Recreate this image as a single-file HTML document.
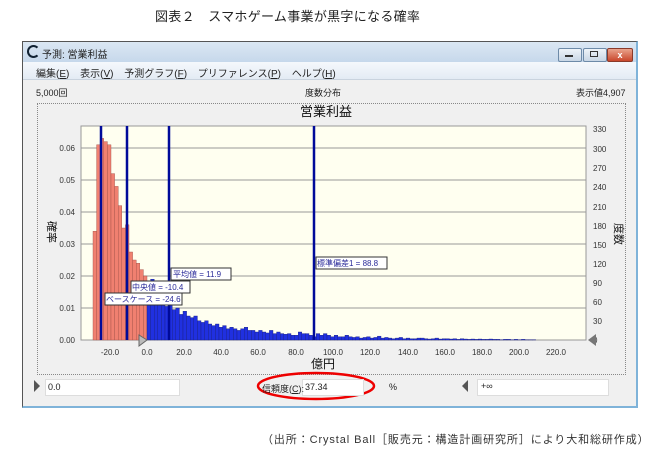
<!DOCTYPE html>
<html><head><meta charset="utf-8"><style>
body{margin:0;width:662px;height:455px;background:#fff;position:relative;overflow:hidden;font-family:"Liberation Sans","Noto Sans CJK JP",sans-serif;}
.a{position:absolute;white-space:nowrap;}
.s{font-size:9px;color:#222;}
</style></head><body>
<div class="a" style="left:155px;top:6px;font-size:13px;color:#222;letter-spacing:0.3px">図表２　スマホゲーム事業が黒字になる確率</div>
<div class="a" style="left:22px;top:41px;width:613px;height:364px;border:1px solid #555;border-right:2px solid #7fb3d9;border-bottom:2px solid #7fb3d9;background:#f0f0f0;"></div>
<div class="a" style="left:23px;top:42px;width:613px;height:20px;background:linear-gradient(#dbe7f3,#c6d8eb);"></div>
<div class="a" style="left:27px;top:45px;width:9px;height:9px;border:2px solid #123;border-right-color:transparent;border-radius:50%"></div>
<div class="a s" style="left:42px;top:46px;font-size:10px">予測: 営業利益</div>
<div class="a" style="left:558px;top:48px;width:22px;height:12px;border:1px solid #6d8aa8;border-radius:2px;background:linear-gradient(#eef3f8,#c8d6e5)"></div>
<div class="a" style="left:565px;top:55px;width:8px;height:2px;background:#333"></div>
<div class="a" style="left:583px;top:48px;width:22px;height:12px;border:1px solid #6d8aa8;border-radius:2px;background:linear-gradient(#eef3f8,#c8d6e5)"></div>
<div class="a" style="left:590px;top:51px;width:6px;height:4px;border:1px solid #333"></div>
<div class="a" style="left:607px;top:48px;width:24px;height:12px;border:1px solid #8a3a2a;border-radius:2px;background:linear-gradient(#e9a38c,#c9472c);color:#fff;font-size:9px;text-align:center;line-height:12px;font-weight:bold">x</div>
<div class="a" style="left:23px;top:62px;width:613px;height:17px;background:linear-gradient(#f5f8fc,#e3ebf4);border-bottom:1px solid #c9d3de"></div>
<div class="a s" style="left:36px;top:65px;font-size:10px;word-spacing:8px">編集(<u>E</u>) 表示(<u>V</u>) 予測グラフ(<u>F</u>) プリファレンス(<u>P</u>) ヘルプ(<u>H</u>)</div>
<div class="a s" style="left:36px;top:86px">5,000回</div>
<div class="a s" style="left:305px;top:86px">度数分布</div>
<div class="a s" style="left:576px;top:86px">表示値4,907</div>
<div class="a" style="left:37px;top:103px;width:587px;height:270px;border:1px dotted #888;background:#f0f0f0"></div>
<div class="a" style="left:300px;top:101px;font-size:13px;color:#111">営業利益</div>
<svg class="a" style="left:0;top:0" width="662" height="455" id="ch">
<rect x="81" y="126" width="505" height="214" fill="#fffff0" stroke="#999"/>
<g stroke="#999" stroke-width="1">
<line x1="81" y1="148" x2="586" y2="148"/><line x1="81" y1="180" x2="586" y2="180"/><line x1="81" y1="212" x2="586" y2="212"/><line x1="81" y1="244" x2="586" y2="244"/><line x1="81" y1="276" x2="586" y2="276"/><line x1="81" y1="308" x2="586" y2="308"/>
</g>
<g id="bars"></g>
<g stroke="#000a9a" stroke-width="2.5">
<line x1="101" y1="126" x2="101" y2="340"/><line x1="127" y1="126" x2="127" y2="340"/><line x1="169" y1="126" x2="169" y2="340"/><line x1="314" y1="126" x2="314" y2="340"/>
</g>
<g font-size="8" fill="#2a2a99" font-family="Liberation Sans,Noto Sans CJK JP,sans-serif">
<rect x="171" y="268" width="60" height="12" fill="#fff" stroke="#333"/><text x="173" y="277">平均値 = 11.9</text>
<rect x="131" y="281" width="59" height="12" fill="#fff" stroke="#333"/><text x="132" y="290">中央値 = -10.4</text>
<rect x="105" y="293" width="77" height="12" fill="#fff" stroke="#333"/><text x="106" y="302">ベースケース = -24.6</text>
<rect x="316" y="257" width="71" height="12" fill="#fff" stroke="#333"/><text x="317" y="266">標準偏差1 = 88.8</text>
</g>
<g font-size="8" fill="#333" font-family="Liberation Sans,sans-serif" text-anchor="end">
<text x="75" y="343">0.00</text><text x="75" y="311">0.01</text><text x="75" y="279">0.02</text><text x="75" y="247">0.03</text><text x="75" y="215">0.04</text><text x="75" y="183">0.05</text><text x="75" y="151">0.06</text>
</g>
<g font-size="8" fill="#333" font-family="Liberation Sans,sans-serif">
<text x="593" y="343">0</text><text x="593" y="324">30</text><text x="593" y="305">60</text><text x="593" y="286">90</text><text x="593" y="267">120</text><text x="593" y="248">150</text><text x="593" y="229">180</text><text x="593" y="210">210</text><text x="593" y="190">240</text><text x="593" y="171">270</text><text x="593" y="152">300</text><text x="593" y="132">330</text>
</g>
<g font-size="8" fill="#333" font-family="Liberation Sans,sans-serif" text-anchor="middle">
<text x="110" y="355">-20.0</text><text x="147" y="355">0.0</text><text x="184" y="355">20.0</text><text x="221" y="355">40.0</text><text x="258" y="355">60.0</text><text x="296" y="355">80.0</text><text x="333" y="355">100.0</text><text x="370" y="355">120.0</text><text x="408" y="355">140.0</text><text x="445" y="355">160.0</text><text x="482" y="355">180.0</text><text x="519" y="355">200.0</text><text x="556" y="355">220.0</text>
</g>
<polygon points="139,335 147,340 139,346" fill="#bbb" stroke="#666"/>
<polygon points="596,334 588,340 596,346" fill="#777"/>
<text x="323" y="368" font-size="12" fill="#111" font-family="Noto Sans CJK JP,sans-serif" text-anchor="middle">億円</text>
<text transform="translate(48,232) rotate(90)" font-size="11" fill="#111" font-family="Noto Sans CJK JP,sans-serif" text-anchor="middle">確率</text>
<text transform="translate(615,234) rotate(90)" font-size="11" fill="#111" font-family="Noto Sans CJK JP,sans-serif" text-anchor="middle">度数</text>
<polygon points="34,380 40,386 34,392" fill="#555"/>
<polygon points="468,380 462,386 468,392" fill="#555"/>
<ellipse cx="316" cy="386" rx="58" ry="13" fill="none" stroke="#e00" stroke-width="2.5"/>
</svg>
<div class="a" style="left:45px;top:379px;width:133px;height:15px;background:#fff;border:1px solid #ddd"></div>
<div class="a s" style="left:48px;top:382px">0.0</div>
<div class="a" style="left:302px;top:379px;width:60px;height:15px;background:#fff;border:1px solid #ddd"></div>
<div class="a s" style="left:262px;top:382px">信頼度(<u>C</u>):</div>
<div class="a s" style="left:305px;top:382px">37.34</div>
<div class="a s" style="left:389px;top:382px">%</div>
<div class="a" style="left:477px;top:379px;width:130px;height:15px;background:#fff;border:1px solid #ddd"></div>
<div class="a s" style="left:481px;top:381px">+∞</div>
<div class="a" style="left:262px;top:431px;font-size:11px;color:#333;letter-spacing:0.9px">（出所：Crystal Ball［販売元：構造計画研究所］により大和総研作成）</div>
<script>
var h=[0.034,0.061,0.063,0.062,0.061,0.052,0.048,0.042,0.035,0.036,0.0275,0.025,0.024,0.022,0.020,
0.0185,0.019,0.014,0.012,0.011,0.0105,0.011,0.0095,0.01,0.008,0.009,0.0075,0.007,0.0075,0.006,0.0055,0.006,0.005,0.0045,0.005,0.004,0.0045,0.0035,0.004,0.0035,0.003,0.0035,0.004,0.003,0.003,0.0025,0.003,0.0025,0.0022,0.003,0.002,0.0025,0.002,0.0018,0.002,0.0015,0.0015,0.0025,0.002,0.002,0.0015,0.001,0.002,0.0015,0.002,0.0015,0.001,0.0015,0.001,0.001,0.0015,0.001,0.0008,0.001,0.0006,0.0008,0.001,0.0006,0.0008,0.0012,0.0006,0.0008,0.0006,0.0004,0.0006,0.0008,0.0004,0.0006,0.0004,0.0004,0.0006,0.0006,0.0004,0.0003,0.0004,0.0006,0.0003,0.0004,0.0004,0.0003,0.0004,0.0002,0.0004,0.0003,0.0002,0.0003,0.0002,0.0003,0.0002,0.0002,0.0003,0.0002,0.0002,0.0001,0.0002,0.0002,0.0001,0.0002,0.0001,0.0002,0.0001,0.0001,0.0001];
var s='',x=93;
for(var i=0;i<h.length;i++){var hh=h[i]*3200;var c=x<146?'#f08070':'#2030e0';var sc=x<146?'#a05048':'#1a2080';
s+='<rect x="'+x+'" y="'+(340-hh)+'" width="3.6" height="'+hh+'" fill="'+c+'" stroke="'+sc+'" stroke-width="0.4"/>';x+=3.6;}
document.getElementById('bars').innerHTML=s;
</script>
</body></html>
